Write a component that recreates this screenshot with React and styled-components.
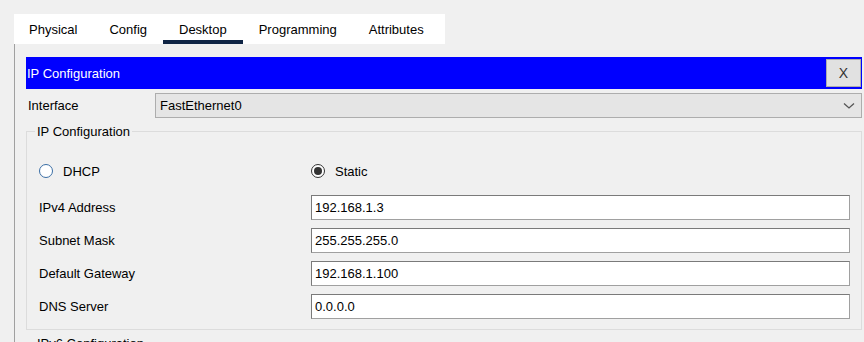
import React from 'react';
import styled, { createGlobalStyle } from 'styled-components';

const GlobalStyle = createGlobalStyle`
  html, body {
    margin: 0;
    padding: 0;
    background: #f0f0f0;
    font-family: "Liberation Sans", Arial, sans-serif;
    font-size: 13px;
    color: #000;
    overflow: hidden;
  }
`;

const Page = styled.div`
  padding: 14px 0 0 14px;
  height: 342px;
  box-sizing: border-box;
`;

const TabBar = styled.div`
  display: flex;
  width: 431px;
  height: 30px;
  background: #fff;
`;

const Tab = styled.div`
  display: flex;
  align-items: center;
  height: 100%;
  box-sizing: border-box;
  padding: 4px 16px 0 16px;
  cursor: pointer;
  border-bottom: 4px solid ${p => (p.$active ? '#0f2444' : 'transparent')};

  &:first-child {
    padding-left: 15px;
  }
`;

const Panel = styled.div`
  border-left: 1px solid #a0a0a0;
  padding: 13px 2px 0 11px;
  height: 100%;
`;

const TitleBar = styled.div`
  display: flex;
  align-items: center;
  justify-content: space-between;
  height: 32px;
  background: #0000ff;
  color: #fff;
  padding: 0 1px;
  box-sizing: border-box;
`;

const CloseButton = styled.button`
  width: 35px;
  height: 28px;
  background: #e1e1e1;
  border: 1px solid #adadad;
  font-family: "Liberation Sans", Arial, sans-serif;
  font-size: 14px;
  color: #333;
  padding: 0;
`;

const FieldRow = styled.div`
  display: grid;
  grid-template-columns: 129px 1fr;
  align-items: center;
  margin-top: 4px;
`;

const RowLabel = styled.span`
  padding-left: 2px;
`;

const Select = styled.div`
  display: flex;
  align-items: center;
  justify-content: space-between;
  height: 25px;
  background: #e5e5e5;
  border: 1px solid #adadad;
  box-sizing: border-box;
  padding: 0 6px 0 4px;
`;

const Group = styled.fieldset`
  margin: 6px 0 0 0;
  border: 1px solid #dcdcdc;
  padding: 23px 11px 10px 12px;
  min-width: 0;
`;

const Legend = styled.legend`
  padding: 0 2px;
  margin-left: -4px;
`;

const Grid = styled.div`
  display: grid;
  grid-template-columns: 272px 1fr;
  grid-auto-rows: 25px;
  row-gap: 8px;
  align-items: center;
`;

const RadioRow = styled.div`
  display: contents;
`;

const RadioLabel = styled.label`
  display: flex;
  align-items: center;
  gap: 10px;
  margin-bottom: 13px;
  margin-top: 6px;
`;

const RadioCircle = styled.span`
  width: 14px;
  height: 14px;
  border-radius: 50%;
  border: 1px solid ${p => (p.$checked ? '#333' : '#3a6ea5')};
  background: #fff;
  box-sizing: border-box;
  display: flex;
  align-items: center;
  justify-content: center;

  &::after {
    content: '';
    width: 8px;
    height: 8px;
    border-radius: 50%;
    background: ${p => (p.$checked ? '#333' : 'transparent')};
  }
`;

const TextBox = styled.div`
  height: 25px;
  box-sizing: border-box;
  background: #fff;
  border: 1px solid #7a7a7a;
  border-right-color: #a0a0a0;
  border-bottom-color: #a0a0a0;
  display: flex;
  align-items: center;
  padding-left: 3px;
`;

const tabs = ['Physical', 'Config', 'Desktop', 'Programming', 'Attributes'];

const fields = [
  ['IPv4 Address', '192.168.1.3'],
  ['Subnet Mask', '255.255.255.0'],
  ['Default Gateway', '192.168.1.100'],
  ['DNS Server', '0.0.0.0'],
];

const App = () => {
  return (
    <Page>
      <GlobalStyle />
      <TabBar>
        {tabs.map(t => (
          <Tab key={t} $active={t === 'Desktop'}>{t}</Tab>
        ))}
      </TabBar>
      <Panel>
        <TitleBar>
          <span>IP Configuration</span>
          <CloseButton>X</CloseButton>
        </TitleBar>
        <FieldRow>
          <RowLabel>Interface</RowLabel>
          <Select>
            <span>FastEthernet0</span>
            <svg width="12" height="8" viewBox="0 0 12 8">
              <path d="M1 1.5 L6 6 L11 1.5" fill="none" stroke="#555" strokeWidth="1.3" />
            </svg>
          </Select>
        </FieldRow>
        <Group>
          <Legend>IP Configuration</Legend>
          <Grid>
            <RadioRow>
              <RadioLabel><RadioCircle />DHCP</RadioLabel>
              <RadioLabel><RadioCircle $checked />Static</RadioLabel>
            </RadioRow>
            {fields.map(([label, value]) => (
              <React.Fragment key={label}>
                <span>{label}</span>
                <TextBox>{value}</TextBox>
              </React.Fragment>
            ))}
          </Grid>
        </Group>
        <Group>
          <Legend>IPv6 Configuration</Legend>
        </Group>
      </Panel>
    </Page>
  );
};

export default App;
